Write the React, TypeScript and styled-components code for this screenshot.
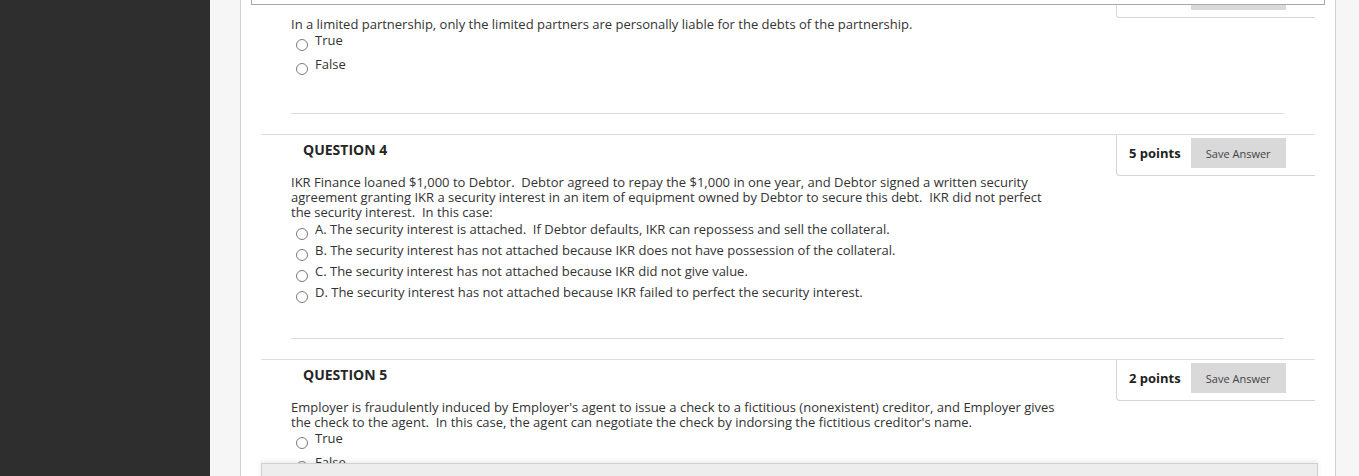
import React from "react";
import styled, { createGlobalStyle } from "styled-components";

const GlobalStyle = createGlobalStyle`
  html, body { margin: 0; padding: 0; }
  body {
    font-family: "Open Sans", "Noto Sans", sans-serif;
    color: #333;
    background: #f6f6f6;
  }
  * { box-sizing: border-box; }
`;

const Page = styled.div`
  display: flex;
  width: 1359px;
  height: 476px;
  overflow: hidden;
`;

const Sidebar = styled.div`
  width: 210px;
  flex: none;
  background: #2e2e2e;
`;

const Gutter = styled.div<{ $w?: number }>`
  width: ${(p) => (p.$w ? `${p.$w}px` : "auto")};
  flex: ${(p) => (p.$w ? "none" : "1")};
  background: #f6f6f6;
`;

const ContentPanel = styled.div`
  position: relative;
  width: 1096px;
  flex: none;
  background: #fff;
  border-left: 1px solid #d2d2d2;
  border-right: 1px solid #d2d2d2;
  overflow: hidden;
`;

const QuestionList = styled.div`
  padding: 0 20px;
  margin-top: -24px;
`;

const Block = styled.div`
  border-top: 1px solid #dcdcdc;
  & + & { margin-top: 20px; }
`;

const Header = styled.div`
  display: flex;
  justify-content: space-between;
  align-items: flex-start;
  height: 40px;
`;

const Title = styled.h3`
  margin: 0;
  padding: 5px 0 0 42px;
  font-size: 14px;
  line-height: 20px;
  font-weight: 700;
  color: #262626;
`;

const PointsBox = styled.div`
  display: flex;
  align-items: center;
  gap: 10px;
  width: 199px;
  padding: 3px 31px 7px 12px;
  border-left: 1px solid #d5d5d5;
  border-bottom: 1px solid #d5d5d5;
  border-bottom-left-radius: 4px;
  background: #fff;
`;

const Points = styled.span`
  font-size: 13px;
  font-weight: 700;
  color: #222;
  white-space: nowrap;
`;

const SaveButton = styled.button`
  width: 95px;
  height: 30px;
  flex: none;
  border: none;
  background: #d9d9d9;
  font-family: "Open Sans", "Noto Sans", sans-serif;
  font-size: 11px;
  color: #444;
  padding: 0;
`;

const Body = styled.div`
  padding: 0 31px 0 30px;
`;

const QuestionText = styled.p`
  margin: 0;
  max-width: 770px;
  font-size: 13px;
  line-height: 15px;
  white-space: pre-wrap;
  color: #333;
`;

const Options = styled.ul<{ $pt: number }>`
  list-style: none;
  margin: 0;
  padding: ${(p) => p.$pt}px 0 0 0;
`;

const OptionRow = styled.li<{ $h: number }>`
  display: flex;
  align-items: flex-start;
  height: ${(p) => p.$h}px;
  padding-left: 5px;
`;

const Radio = styled.span<{ $mt: number }>`
  width: 12px;
  height: 12px;
  flex: none;
  margin-top: ${(p) => p.$mt}px;
  border: 1px solid #7a7a7a;
  border-radius: 50%;
  background: #fff;
`;

const OptionLabel = styled.span<{ $pt: number }>`
  margin-left: 7px;
  padding-top: ${(p) => p.$pt}px;
  font-size: 13px;
  line-height: 15px;
  color: #333;
  white-space: pre;
`;

const Separator = styled.hr`
  margin: 33px 0 0 0;
  border: none;
  border-top: 1px solid #dcdcdc;
  height: 0;
`;

const TopOverlay = styled.div`
  position: absolute;
  left: 10px;
  right: 10px;
  top: -10px;
  height: 15px;
  background: #fff;
  border: 1px solid #a8a8a8;
`;

const BottomBar = styled.div`
  position: absolute;
  left: 20px;
  right: 17px;
  top: 463px;
  height: 30px;
  background: #ededed;
  border: 1px solid #d0d0d0;
  box-shadow: 0 -2px 5px rgba(0, 0, 0, 0.08);
`;

type Q = {
  num: number;
  points: string;
  text: string;
  options: string[];
  tf: boolean;
};

const questions: Q[] = [
  {
    num: 3,
    points: "5 points",
    text: "In a limited partnership, only the limited partners are personally liable for the debts of the partnership.",
    options: ["True", "False"],
    tf: true,
  },
  {
    num: 4,
    points: "5 points",
    text: "IKR Finance loaned $1,000 to Debtor.  Debtor agreed to repay the $1,000 in one year, and Debtor signed a written security agreement granting IKR a security interest in an item of equipment owned by Debtor to secure this debt.  IKR did not perfect the security interest.  In this case:",
    options: [
      "A. The security interest is attached.  If Debtor defaults, IKR can repossess and sell the collateral.",
      "B. The security interest has not attached because IKR does not have possession of the collateral.",
      "C. The security interest has not attached because IKR did not give value.",
      "D. The security interest has not attached because IKR failed to perfect the security interest.",
    ],
    tf: false,
  },
  {
    num: 5,
    points: "2 points",
    text: "Employer is fraudulently induced by Employer's agent to issue a check to a fictitious (nonexistent) creditor, and Employer gives the check to the agent.  In this case, the agent can negotiate the check by indorsing the fictitious creditor's name.",
    options: ["True", "False"],
    tf: true,
  },
];

const Question: React.FC<{ q: Q }> = ({ q }) => (
  <Block>
    <Header>
      <Title>QUESTION {q.num}</Title>
      <PointsBox>
        <Points>{q.points}</Points>
        <SaveButton>Save Answer</SaveButton>
      </PointsBox>
    </Header>
    <Body>
      <QuestionText>{q.text}</QuestionText>
      <Options $pt={q.tf ? 0 : 1}>
        {q.options.map((o) => (
          <OptionRow key={o} $h={q.tf ? 24 : 21}>
            <Radio $mt={q.tf ? 7 : 7} />
            <OptionLabel $pt={q.tf ? 1 : 1}>{o}</OptionLabel>
          </OptionRow>
        ))}
      </Options>
      <Separator />
    </Body>
  </Block>
);

export default function App() {
  return (
    <>
      <GlobalStyle />
      <Page>
        <Sidebar />
        <Gutter $w={30} />
        <ContentPanel>
          <QuestionList>
            {questions.map((q) => (
              <Question key={q.num} q={q} />
            ))}
          </QuestionList>
          <TopOverlay />
          <BottomBar />
        </ContentPanel>
        <Gutter />
      </Page>
    </>
  );
}
